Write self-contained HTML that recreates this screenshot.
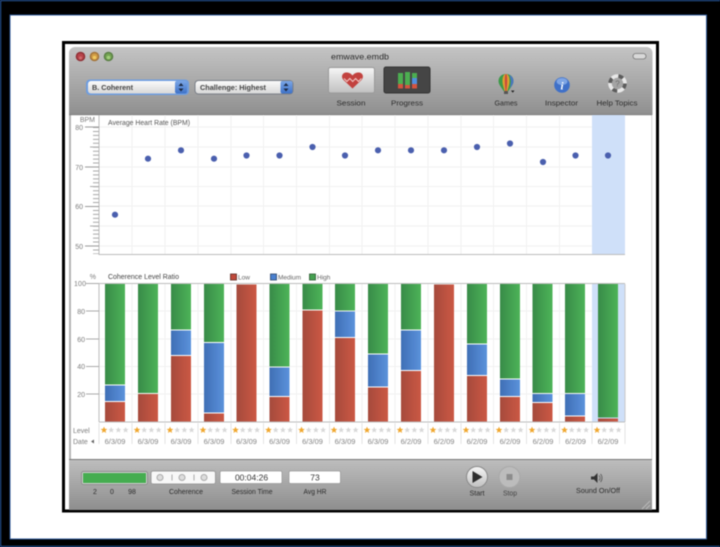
<!DOCTYPE html>
<html><head><meta charset="utf-8"><title>emwave.emdb</title>
<style>
html,body{margin:0;padding:0;background:#000;width:720px;height:547px;overflow:hidden}
svg{display:block;filter:blur(.55px)}
text{font-family:"Liberation Sans",sans-serif}
.l{font-size:7.500px;fill:#2c2c2c}
.a{font-size:7px;fill:#7c7c7c}
.d{font-size:7.500px;fill:#848484;text-anchor:middle}
.c{text-anchor:middle}
.e{text-anchor:end}
.g{stroke:#f1f1f1;stroke-width:1}
</style></head><body>
<svg width="720" height="547" viewBox="0 0 720 547" xmlns="http://www.w3.org/2000/svg">
<defs>
<linearGradient id="tb" x1="0" y1="0" x2="0" y2="1"><stop offset="0" stop-color="#c4c4c4"/><stop offset="1" stop-color="#8f8f8f"/></linearGradient>
<linearGradient id="bb" x1="0" y1="0" x2="0" y2="1"><stop offset="0" stop-color="#bdbdbd"/><stop offset="1" stop-color="#8e8e8e"/></linearGradient>
<linearGradient id="gr" x1="0" y1="0" x2="1" y2="0"><stop offset="0" stop-color="#388b48"/><stop offset="1" stop-color="#4db458"/></linearGradient>
<linearGradient id="re" x1="0" y1="0" x2="1" y2="0"><stop offset="0" stop-color="#a54a3c"/><stop offset="1" stop-color="#cc5844"/></linearGradient>
<linearGradient id="bl" x1="0" y1="0" x2="1" y2="0"><stop offset="0" stop-color="#3f6fb5"/><stop offset="1" stop-color="#5b92dc"/></linearGradient>
<linearGradient id="dd" x1="0" y1="0" x2="0" y2="1"><stop offset="0" stop-color="#fbfbfb"/><stop offset="1" stop-color="#d8d8d8"/></linearGradient>
<linearGradient id="st" x1="0" y1="0" x2="0" y2="1"><stop offset="0" stop-color="#7ba6e6"/><stop offset="1" stop-color="#3e72c8"/></linearGradient>
<linearGradient id="bt" x1="0" y1="0" x2="0" y2="1"><stop offset="0" stop-color="#f6f6f6"/><stop offset="1" stop-color="#c0c0c0"/></linearGradient>
<g id="s">
<polygon points="0,-3.400 1,-1.100 3.400,-1 1.500,.5 2.100,3 0,1.600 -2.100,3 -1.500,.5 -3.400,-1 -1,-1.100" fill="#f0a830"/>
<polygon transform="translate(7.200 0)" points="0,-3 .9,-1 3,-.9 1.300,.4 1.900,2.600 0,1.400 -1.900,2.600 -1.300,.4 -3,-.9 -.9,-1" fill="#d8d8d8"/>
<polygon transform="translate(14.400 0)" points="0,-3 .9,-1 3,-.9 1.300,.4 1.900,2.600 0,1.400 -1.900,2.600 -1.300,.4 -3,-.9 -.9,-1" fill="#d8d8d8"/>
<polygon transform="translate(21.600 0)" points="0,-3 .9,-1 3,-.9 1.300,.4 1.900,2.600 0,1.400 -1.900,2.600 -1.300,.4 -3,-.9 -.9,-1" fill="#d8d8d8"/>
</g>
</defs>

<!-- outer frame -->
<rect x="0" y="0" width="720" height="547" fill="#000"/>
<rect x="0" y="0" width="720" height="1.200" fill="#234f8f"/>
<rect x="0" y="0" width="1.200" height="547" fill="#234f8f"/>
<rect x="0" y="545.800" width="720" height="1.200" fill="#234f8f"/>
<rect x="10" y="15" width="696.500" height="524" fill="#fff" stroke="#2f5a98" stroke-width="1"/>

<!-- window frame -->
<rect x="63.500" y="42.500" width="594" height="468.500" fill="#fff" stroke="#000" stroke-width="3"/>
<path d="M69 53a6 6 0 0 1 6-6H647a6 6 0 0 1 5.500 6V115H69Z" fill="url(#tb)"/>
<rect x="69" y="115" width="583" height="345" fill="#b5b5b5"/>
<rect x="71" y="115" width="580.500" height="344" fill="#fff"/>
<rect x="69" y="459" width="583" height="1.200" fill="#777"/>
<rect x="69" y="460" width="583" height="50" fill="url(#bb)"/>
<rect x="69" y="114" width="583" height="1.200" fill="#808080"/>
<path d="M642 509l8-8M646 509l4-4" stroke="#bbb" stroke-width="1"/>

<!-- title bar -->
<circle cx="80.500" cy="56.500" r="4.800" fill="#8f3036"/><circle cx="80.500" cy="56.500" r="3.300" fill="#b8434a"/><circle cx="80.500" cy="58" r="1.600" fill="#cf6a6c"/>
<circle cx="94.500" cy="56.500" r="4.800" fill="#a3743a"/><circle cx="94.500" cy="56.500" r="3.300" fill="#cf9a45"/><circle cx="94.500" cy="57.500" r="1.800" fill="#f1c95f"/>
<circle cx="108.500" cy="56.500" r="4.800" fill="#5a7f45"/><circle cx="108.500" cy="56.500" r="3.300" fill="#74a452"/><circle cx="108.500" cy="57.500" r="1.800" fill="#a3cf7c"/>
<text x="360" y="59.500" class="c" font-size="8.500" fill="#2c2c2c" textLength="58" lengthAdjust="spacingAndGlyphs">emwave.emdb</text>
<rect x="633" y="53.500" width="13" height="5.500" rx="2.700" fill="#d8d8d8" stroke="#777" stroke-width=".8"/>

<!-- popups -->
<rect x="86" y="79.500" width="103" height="15.500" rx="4" fill="#6e9de0"/>
<rect x="88" y="81" width="99" height="12.500" rx="3" fill="url(#dd)"/>
<rect x="175" y="81" width="12" height="12.500" rx="2" fill="url(#st)"/>
<path d="M178.500 86l2.500-3 2.500 3zM178.500 88.500l2.500 3 2.500-3z" fill="#1c2a44"/>
<text x="92" y="90" font-size="7.500" font-weight="bold" fill="#444" textLength="41" lengthAdjust="spacingAndGlyphs">B. Coherent</text>
<rect x="194.500" y="80" width="99" height="14.500" rx="4" fill="#7a7f88"/>
<rect x="195.500" y="81" width="97" height="12.500" rx="3" fill="url(#dd)"/>
<rect x="280.500" y="81" width="12" height="12.500" rx="2" fill="url(#st)"/>
<path d="M283.500 86l2.500-3 2.500 3zM283.500 88.500l2.500 3 2.500-3z" fill="#1c2a44"/>
<text x="200" y="90" font-size="7.500" font-weight="bold" fill="#444" textLength="66" lengthAdjust="spacingAndGlyphs">Challenge: Highest</text>

<!-- session / progress -->
<rect x="328.500" y="67.500" width="46" height="25.500" rx="2" fill="url(#bt)" stroke="#999" stroke-width="1"/>
<path d="M352.500 88.500l-9-8.500c-3-3.500-1-7.500 3-7.500 2.800 0 4.700 1.300 6 3 1.300-1.700 3.200-3 6-3 4 0 6 4 3 7.500z" fill="#c2423f"/>
<path d="M344 78.500l2.900 3 2.900-3 2.900 3 2.900-3 2.900 3 2.900-3" fill="none" stroke="#f3c9c6" stroke-width="1"/>
<rect x="384" y="67" width="46" height="26" rx="2" fill="#454545" stroke="#333" stroke-width="1"/>
<rect x="398" y="73" width="5" height="13" fill="#4cae50"/><rect x="398" y="84" width="5" height="4.500" fill="#d5533f"/>
<rect x="405" y="72" width="5" height="15" fill="#4cae50"/><rect x="405" y="85" width="5" height="3.500" fill="#d5533f"/>
<rect x="412" y="73" width="5" height="5" fill="#4cae50"/><rect x="412" y="78" width="5" height="6" fill="#4f8fdf"/><rect x="412" y="84" width="5" height="4.500" fill="#d5533f"/>
<text x="351" y="105.500" class="l c" textLength="29" lengthAdjust="spacingAndGlyphs">Session</text>
<text x="407" y="105.500" class="l c" textLength="32" lengthAdjust="spacingAndGlyphs">Progress</text>

<!-- right tools -->
<path d="M506 74c5 0 7.500 3.500 7.500 7 0 4-3.500 7-5 10h-5c-1.500-3-5-6-5-10 0-3.500 2.500-7 7.500-7z" fill="#3d9a48"/>
<path d="M506 74c2.500 0 3.500 3.500 3.500 7 0 4-1.500 7-2 10h-3c-.5-3-2-6-2-10 0-3.500 1-7 3.500-7z" fill="#e0a030"/>
<path d="M506 74c1 0 1.200 3.500 1.200 7 0 4-.5 7-.7 10h-1c-.2-3-.7-6-.7-10 0-3.500.2-7 1.200-7z" fill="#c94a3c"/>
<path d="M513.500 81c0 3-2 5-3.500 7.500l1-7.500-1.500-6c2.500 1 4 3.500 4 6z" fill="#4a76c0"/>
<rect x="504" y="91" width="4" height="3" fill="#555"/>
<path d="M511 90.500h3.500l-1.750 2.200z" fill="#222"/>
<text x="506" y="105.500" class="l c" textLength="23" lengthAdjust="spacingAndGlyphs">Games</text>
<circle cx="562" cy="85" r="7.800" fill="#3f70c8"/><ellipse cx="562" cy="81.500" rx="5.500" ry="3.500" fill="#7ea5e4"/>
<text x="562" y="89.500" class="c" font-size="11" font-weight="bold" font-style="italic" fill="#fff" style="font-family:'Liberation Serif',serif">i</text>
<text x="561.500" y="105.500" class="l c" textLength="33" lengthAdjust="spacingAndGlyphs">Inspector</text>
<circle cx="617.500" cy="83.500" r="7.500" fill="#a4a4a4" stroke="#e8e8e8" stroke-width="3.600"/>
<circle cx="617.500" cy="83.500" r="7.500" fill="none" stroke="#5c5c5c" stroke-width="3.600" stroke-dasharray="5 7"/>
<text x="617.500" y="86.500" class="c" font-size="8" fill="#6c6c6c">?</text>
<text x="617" y="105.500" class="l c" textLength="41" lengthAdjust="spacingAndGlyphs">Help Topics</text>

<!-- HR chart grid -->
<g class="g">
<path d="M132 115V254M165 115V254M198 115V254M231 115V254M263.500 115V254M296.500 115V254M329.500 115V254M362 115V254M395 115V254M428 115V254M461 115V254M493.500 115V254M526.500 115V254M559.500 115V254"/>
<path d="M99 127H592M99 147H592M99 167H592M99 186.500H592M99 206H592M99 226H592M99 246H592"/>
</g>
<rect x="592" y="115" width="33" height="139" fill="#cfe0f9"/>
<path d="M99 115V254.500H625" fill="none" stroke="#bdbdbd" stroke-width="1"/>
<line x1="96" y1="127" x2="96" y2="254" stroke="#a8a8a8" stroke-width="6" stroke-dasharray="1 2.950"/>
<path d="M85 127H99M85 167H99M85 206.500H99M85 246H99" stroke="#999" stroke-width="1"/>
<path d="M90 147H99M90 186.500H99M90 226H99" stroke="#aaa" stroke-width="1"/>
<text x="95" y="122" class="a e">BPM</text>
<text x="83" y="130" class="a e">80</text>
<text x="83" y="170" class="a e">70</text>
<text x="83" y="209" class="a e">60</text>
<text x="83" y="249" class="a e">50</text>
<text x="108" y="125" class="a" style="fill:#555" textLength="82" lengthAdjust="spacingAndGlyphs">Average Heart Rate (BPM)</text>

<!-- HR dots -->
<g fill="#4a5fae">
<circle cx="115" cy="214.700" r="3.100"/><circle cx="148" cy="158.700" r="3.100"/><circle cx="181" cy="150.300" r="3.100"/><circle cx="214" cy="158.700" r="3.100"/>
<circle cx="246.500" cy="155.500" r="3.100"/><circle cx="279.500" cy="155.500" r="3.100"/><circle cx="312.500" cy="147" r="3.100"/><circle cx="345" cy="155.500" r="3.100"/>
<circle cx="378" cy="150.300" r="3.100"/><circle cx="411" cy="150.300" r="3.100"/><circle cx="444" cy="150.300" r="3.100"/><circle cx="477" cy="147" r="3.100"/>
<circle cx="510" cy="143.500" r="3.100"/><circle cx="543" cy="162" r="3.100"/><circle cx="575.500" cy="155.500" r="3.100"/><circle cx="608" cy="155.500" r="3.100"/>
</g>

<!-- ratio chart grid -->
<g class="g">
<path d="M132 284V422M165 284V422M198 284V422M231 284V422M263.500 284V422M296.500 284V422M329.500 284V422M362 284V422M395 284V422M428 284V422M461 284V422M493.500 284V422M526.500 284V422M559.500 284V422"/>
<path d="M99 311H592M99 339H592M99 366.500H592M99 394H592"/>
</g>
<rect x="592" y="284" width="33" height="138" fill="#cfe0f9"/>
<path d="M625 284V422" stroke="#c8c8c8" stroke-width="1"/>
<path d="M99 422V283.500H625M99 422H625" fill="none" stroke="#bdbdbd" stroke-width="1"/>
<path d="M86 283.500H99M86 311H99M86 339H99M86 366.500H99M86 394H99" stroke="#aaa" stroke-width="1"/>
<text x="96" y="279" class="a e">%</text>
<text x="74" y="286" class="a" textLength="12">100</text>
<text x="85" y="314" class="a e">80</text>
<text x="85" y="342" class="a e">60</text>
<text x="85" y="369" class="a e">40</text>
<text x="85" y="397" class="a e">20</text>
<text x="108" y="279" class="a" style="fill:#444" textLength="71" lengthAdjust="spacingAndGlyphs">Coherence Level Ratio</text>
<rect x="230.500" y="274" width="6" height="6" fill="#c0493a" stroke="#5a2a22" stroke-width=".8"/>
<text x="238" y="279.500" font-size="6.500" fill="#666">Low</text>
<rect x="270.500" y="274" width="6" height="6" fill="#4a80d0" stroke="#2a4468" stroke-width=".8"/>
<text x="278" y="279.500" font-size="6.500" fill="#666" textLength="23">Medium</text>
<rect x="309.500" y="274" width="6" height="6" fill="#45a050" stroke="#2a5a30" stroke-width=".8"/>
<text x="317" y="279.500" font-size="6.500" fill="#666">High</text>

<!-- bars -->
<g fill="url(#gr)">
<rect x="105" y="284" width="20" height="100.500"/>
<rect x="138" y="284" width="20" height="109"/>
<rect x="171" y="284" width="20" height="45.500"/>
<rect x="204" y="284" width="20" height="58"/>
<rect x="269.500" y="284" width="20" height="82.500"/>
<rect x="302.500" y="284" width="20" height="25.500"/>
<rect x="335" y="284" width="20" height="26.500"/>
<rect x="368" y="284" width="20" height="69.500"/>
<rect x="401" y="284" width="20" height="45.500"/>
<rect x="467" y="284" width="20" height="59.500"/>
<rect x="500" y="284" width="20" height="94.500"/>
<rect x="532.500" y="284" width="20" height="109"/>
<rect x="565" y="284" width="20" height="109"/>
<rect x="598" y="284" width="20" height="133.500"/>
</g>
<g fill="url(#bl)">
<rect x="105" y="385.500" width="20" height="15.500"/>
<rect x="171" y="330.500" width="20" height="24.500"/>
<rect x="204" y="343" width="20" height="69.500"/>
<rect x="269.500" y="367.500" width="20" height="28.500"/>
<rect x="335" y="311.500" width="20" height="25.500"/>
<rect x="368" y="354.500" width="20" height="32"/>
<rect x="401" y="330.500" width="20" height="39.500"/>
<rect x="467" y="344.500" width="20" height="30.500"/>
<rect x="500" y="379.500" width="20" height="16.500"/>
<rect x="532.500" y="394" width="20" height="8"/>
<rect x="565" y="394" width="20" height="21.500"/>
</g>
<g fill="url(#re)">
<rect x="105" y="402" width="20" height="19.500"/>
<rect x="138" y="394" width="20" height="27.500"/>
<rect x="171" y="356" width="20" height="65.500"/>
<rect x="204" y="413.500" width="20" height="8"/>
<rect x="236.500" y="284.500" width="20" height="137"/>
<rect x="269.500" y="397" width="20" height="24.500"/>
<rect x="302.500" y="310.500" width="20" height="111"/>
<rect x="335" y="338" width="20" height="83.500"/>
<rect x="368" y="387.500" width="20" height="34"/>
<rect x="401" y="371" width="20" height="50.500"/>
<rect x="434" y="284.500" width="20" height="137"/>
<rect x="467" y="376" width="20" height="45.500"/>
<rect x="500" y="397" width="20" height="24.500"/>
<rect x="532.500" y="403" width="20" height="18.500"/>
<rect x="565" y="416.500" width="20" height="5"/>
<rect x="598" y="418.500" width="20" height="3"/>
</g>

<!-- level/date rows -->
<path d="M99 423V444M132 423V444M165 423V444M198 423V444M231 423V444M263.500 423V444M296.500 423V444M329.500 423V444M362 423V444M395 423V444M428 423V444M461 423V444M493.500 423V444M526.500 423V444M559.500 423V444M592 423V444M625 423V444" stroke="#e4e4e4" stroke-width="1"/>
<text x="73" y="433" class="a" font-size="7.500">Level</text>
<text x="73" y="444" class="a" font-size="7.500">Date</text>
<path d="M91 441.500l3-2v4z" fill="#666"/>
<use href="#s" x="104" y="430"/><use href="#s" x="137" y="430"/><use href="#s" x="170" y="430"/><use href="#s" x="203" y="430"/>
<use href="#s" x="235.500" y="430"/><use href="#s" x="268.500" y="430"/><use href="#s" x="301.500" y="430"/><use href="#s" x="334" y="430"/>
<use href="#s" x="367" y="430"/><use href="#s" x="400" y="430"/><use href="#s" x="433" y="430"/><use href="#s" x="466" y="430"/>
<use href="#s" x="499" y="430"/><use href="#s" x="532" y="430"/><use href="#s" x="564.500" y="430"/><use href="#s" x="597" y="430"/>
<text x="115" y="444" class="d">6/3/09</text><text x="148" y="444" class="d">6/3/09</text><text x="181" y="444" class="d">6/3/09</text><text x="214" y="444" class="d">6/3/09</text>
<text x="246.500" y="444" class="d">6/3/09</text><text x="279.500" y="444" class="d">6/3/09</text><text x="312.500" y="444" class="d">6/3/09</text><text x="345" y="444" class="d">6/3/09</text>
<text x="378" y="444" class="d">6/3/09</text><text x="411" y="444" class="d">6/2/09</text><text x="444" y="444" class="d">6/2/09</text><text x="477" y="444" class="d">6/2/09</text>
<text x="510" y="444" class="d">6/2/09</text><text x="543" y="444" class="d">6/2/09</text><text x="575.500" y="444" class="d">6/2/09</text><text x="608" y="444" class="d">6/2/09</text>

<!-- bottom bar -->
<rect x="81.500" y="471.500" width="66" height="13" rx="2" fill="#d2d2d2" stroke="#8c8c8c" stroke-width="1"/>
<rect x="83" y="473" width="63" height="10" fill="#45ad50"/>
<text x="95" y="494" class="l c" style="font-size:7px">2</text>
<text x="112" y="494" class="l c" style="font-size:7px">0</text>
<text x="132" y="494" class="l c" style="font-size:7px">98</text>
<rect x="151" y="471" width="64.500" height="13" rx="2" fill="#f8f8f8" stroke="#9a9a9a" stroke-width="1"/>
<circle cx="160" cy="477.500" r="3" fill="#ddd" stroke="#aaa" stroke-width="1"/>
<circle cx="182" cy="477.500" r="3" fill="#ddd" stroke="#aaa" stroke-width="1"/>
<circle cx="204" cy="477.500" r="3" fill="#ddd" stroke="#aaa" stroke-width="1"/>
<path d="M172 474.500V480.500M194 474.500V480.500" stroke="#aaa" stroke-width="1"/>
<rect x="220" y="471" width="62" height="12.500" rx="1.500" fill="#fff" stroke="#999" stroke-width=".8"/>
<text x="251.500" y="480.500" class="c" font-size="8.500" fill="#333">00:04:26</text>
<rect x="289" y="471" width="51.500" height="12.500" rx="1.500" fill="#fff" stroke="#999" stroke-width=".8"/>
<text x="315" y="480.500" class="c" font-size="8.500" fill="#333">73</text>
<text x="186" y="494" class="l c" textLength="34" lengthAdjust="spacingAndGlyphs">Coherence</text>
<text x="252" y="494" class="l c" textLength="41" lengthAdjust="spacingAndGlyphs">Session Time</text>
<text x="315" y="494" class="l c" textLength="23" lengthAdjust="spacingAndGlyphs">Avg HR</text>

<circle cx="477" cy="477" r="10.500" fill="url(#bt)" stroke="#888" stroke-width="1"/>
<path d="M472.500 471l10 6-10 6z" fill="#2e2e2e"/>
<text x="477" y="495.500" class="l c" textLength="15" lengthAdjust="spacingAndGlyphs">Start</text>
<circle cx="509.500" cy="477" r="10.500" fill="#bcbcbc" stroke="#a8a8a8" stroke-width="1"/>
<rect x="506.500" y="474" width="6" height="6" fill="#8c8c8c"/>
<text x="510" y="495.500" class="l c" style="fill:#444" textLength="14" lengthAdjust="spacingAndGlyphs">Stop</text>
<path d="M591 476.500h3l3.500-3.500v10l-3.500-3.500h-3z" fill="#333"/>
<path d="M599 475.500c1.500 1.500 1.500 3.500 0 5M600.500 474c2 2 2 6 0 8" fill="none" stroke="#555" stroke-width=".8"/>
<text x="598" y="493" class="l c" textLength="44" lengthAdjust="spacingAndGlyphs">Sound On/Off</text>
</svg>
</body></html>
